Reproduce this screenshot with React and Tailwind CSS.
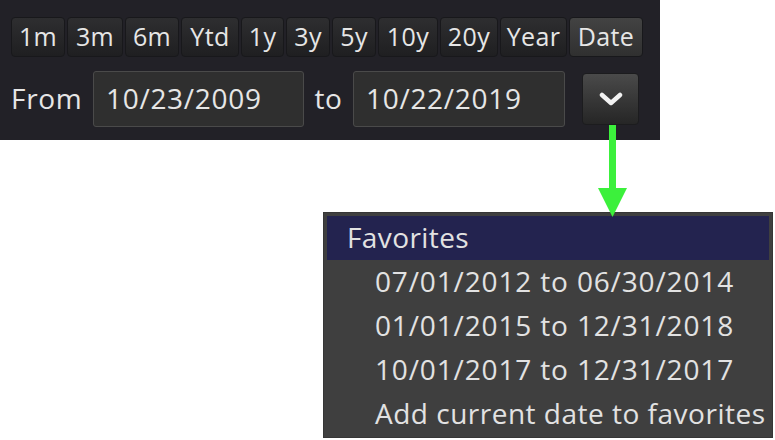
import React from 'react';

const ranges = [
  { label: '1m', w: 'w-[54px]' },
  { label: '3m', w: 'w-[56px]' },
  { label: '6m', w: 'w-[54px]' },
  { label: 'Ytd', w: 'w-[58px]' },
  { label: '1y', w: 'w-[43px]' },
  { label: '3y', w: 'w-[44px]' },
  { label: '5y', w: 'w-[44px]' },
  { label: '10y', w: 'w-[60px]' },
  { label: '20y', w: 'w-[58px]' },
  { label: 'Year', w: 'w-[67px]' },
  { label: 'Date', w: 'w-[74px]', active: true },
];

const favorites = [
  '07/01/2012 to 06/30/2014',
  '01/01/2015 to 12/31/2018',
  '10/01/2017 to 12/31/2017',
];

export default function App(){
  return (
    <div className="relative w-[775px] h-[440px] bg-white overflow-hidden font-['Open_Sans',sans-serif]">
      <div className="w-[660px] h-[140px] bg-[#222127] pt-[17px] pl-[11px]">
        <div className="flex gap-[2px]">
          {ranges.map(r => (
            <button
              key={r.label}
              className={`${r.w} h-[40px] rounded-[4px] border border-[#18181b] text-[25px] tracking-[0.4px] leading-none text-[#e6e6e6] flex items-center justify-center pb-[1px] ${r.active ? 'bg-gradient-to-b from-[#434343] to-[#303030]' : 'bg-gradient-to-b from-[#2e2e30] to-[#1f1f21]'}`}
            >
              {r.label}
            </button>
          ))}
        </div>

        <div className="flex items-center mt-[14px] h-[56px] text-[28px] tracking-[0.7px] text-[#e6e6e6]">
          <span className="w-[82px] leading-none pb-[2px]">From</span>
          <div className="w-[211px] h-[56px] rounded-[3px] border border-[#4a4a4a] bg-[#2f2f2f] flex items-center pl-[12px] pb-[2px]">
            10/23/2009
          </div>
          <span className="w-[49px] text-center leading-none pb-[2px]">to</span>
          <div className="w-[212px] h-[56px] rounded-[3px] border border-[#4a4a4a] bg-[#2f2f2f] flex items-center pl-[12px] pb-[2px]">
            10/22/2019
          </div>
          <button className="ml-[17px] w-[57px] h-[52px] rounded-[4px] border border-[#1c1c1e] bg-gradient-to-b from-[#4a4a4a] to-[#262626] flex items-center justify-center">
            <svg width="24" height="14" viewBox="0 0 24 14">
              <path d="M3 3 L12 11 L21 3" fill="none" stroke="#f2f2f2" strokeWidth="4.5" strokeLinecap="round" strokeLinejoin="round" />
            </svg>
          </button>
        </div>
      </div>

      <div className="ml-[323px] mt-[72px] w-[450px] h-[226px] bg-[#3f3f3f] border border-[#363636] p-[3px] text-[28px] text-[#e2e2e2]">
        <div className="h-[44px] bg-[#23234f] pl-[20px] flex items-center pb-[3px] tracking-[0.4px]">Favorites</div>
        {favorites.map(f => (
          <div key={f} className="h-[44px] pl-[48px] flex items-center pb-[3px] tracking-[0.85px]">{f}</div>
        ))}
        <div className="h-[44px] pl-[48px] flex items-center whitespace-nowrap pb-[3px] tracking-[0.5px]">Add current date to favorites</div>
      </div>

      <svg className="absolute left-[596px] top-[125px]" width="34" height="93" viewBox="0 0 34 93">
        <rect x="13" y="0" width="7" height="64" fill="#3cf03c" />
        <polygon points="2,63 31,63 16.5,92" fill="#3cf03c" />
      </svg>
    </div>
  );
}
